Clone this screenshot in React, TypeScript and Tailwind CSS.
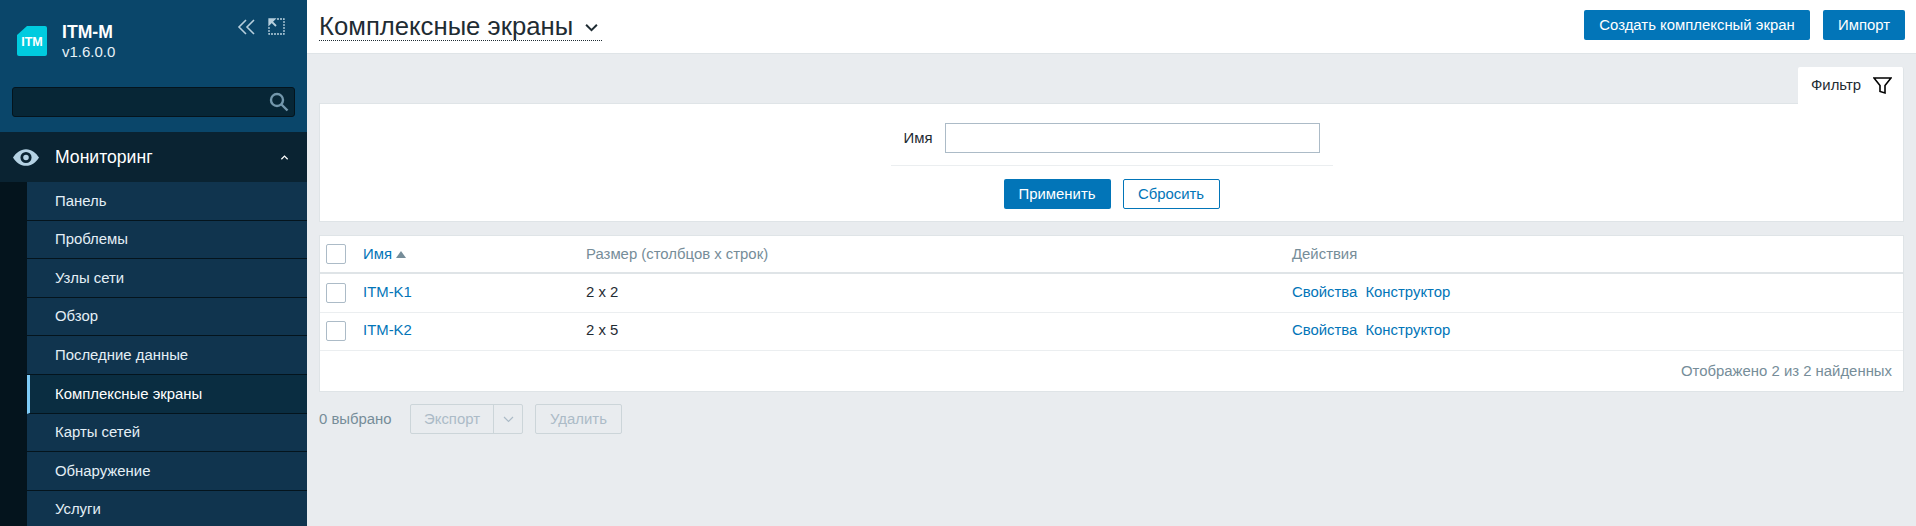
import React from "react";

const items = ["Панель", "Проблемы", "Узлы сети", "Обзор", "Последние данные", "Комплексные экраны", "Карты сетей", "Обнаружение", "Услуги"];

function Sidebar() {
  return (
    <aside className="w-[307px] h-[526px] shrink-0 bg-[#0a466a] overflow-hidden flex flex-col">
      <div className="h-[132px] shrink-0 flex flex-col">
        <div className="flex h-[87px] pl-[17px] pr-[22px]">
          <svg width="30" height="30" viewBox="0 0 30 30" className="mt-[26px] shrink-0">
            <path d="M10 0H28a2 2 0 0 1 2 2V28a2 2 0 0 1-2 2H2a2 2 0 0 1-2-2V9Z" fill="#00cbdf" />
            <text x="15" y="20" textAnchor="middle" fill="#fff" fontSize="12.5" fontWeight="700" fontFamily="Liberation Sans">ITM</text>
          </svg>
          <div className="ml-[15px] mt-[22px] text-white leading-[20px]">
            <div className="font-bold text-[17.6px] h-[20px]">ITM-M</div>
            <div className="text-[#e6f1f7] text-[15px] -mt-px pt-[1px]">v1.6.0.0</div>
          </div>
          <div className="ml-auto mt-[18px] flex gap-[13px] h-[18px]">
            <svg width="18" height="18" viewBox="0 0 18 18" fill="none" stroke="#b7cfdd" strokeWidth="1.6">
              <path d="M9 2 2 9l7 7M17 2l-7 7 7 7" />
            </svg>
            <svg width="17" height="17" viewBox="0 0 17 17" fill="none" stroke="#b7cfdd" strokeWidth="1.3">
              <path d="M9 1h7v15H1V9" strokeDasharray="2 1" />
              <path d="M1.5 1.5 8 8" strokeWidth="1.8" />
              <path d="M1 1h6L1 7Z" fill="#b7cfdd" />
            </svg>
          </div>
        </div>
        <div className="mx-[12px] h-[30px] bg-[#072636] border border-[#04141d] rounded-[3px] flex items-center justify-end pr-[5px]">
          <svg width="20" height="20" viewBox="0 0 20 20" fill="none" stroke="#7397ac" strokeWidth="2.4">
            <circle cx="8" cy="8" r="6" />
            <path d="m12.5 12.5 6 6" />
          </svg>
        </div>
      </div>
      <div className="h-[50px] shrink-0 bg-[#0a2332] flex items-center text-white pl-[13px] pr-[18px]">
        <svg width="26" height="17" viewBox="0 0 28 18" className="shrink-0">
          <path fillRule="evenodd" fill="#b5d2e4" d="M14 0C8 0 3 4 0 9c3 5 8 9 14 9s11-4 14-9c-3-5-8-9-14-9Zm0 3a6 6 0 1 1 0 12 6 6 0 0 1 0-12Zm0 3a3 3 0 1 0 0 6 3 3 0 0 0 0-6Z" />
        </svg>
        <span className="ml-[16px] text-[17.6px]">Мониторинг</span>
        <svg width="9" height="7" viewBox="0 0 10 7" fill="none" stroke="#fff" strokeWidth="1.4" className="ml-auto">
          <path d="M1.5 5.5 5 2l3.5 3.5" />
        </svg>
      </div>
      <div className="flex-1 bg-[#04141d] pl-[27px]">
        {items.map((t) => {
          const active = t === "Комплексные экраны";
          return (
            <div
              key={t}
              className={
                active
                  ? "h-[38.6px] border-b border-[#04141d] flex items-center pl-[25px] bg-[#0a2d41] text-white border-l-[3px] border-l-[#7ecbf7]"
                  : "h-[38.6px] border-b border-[#04141d] flex items-center pl-[28px] bg-[#10344e] text-[#e4eff6]"
              }
            >
              {t}
            </div>
          );
        })}
      </div>
    </aside>
  );
}

function Cb() {
  return <span className="block w-[20px] h-[20px] bg-white border border-[#acbbc7] rounded-[2px]" />;
}

function Row({ name, size }: { name: string; size: string }) {
  return (
    <div className="flex items-center h-[38.5px] border-b border-[#ebeef0]">
      <div className="w-[43px] pl-[6px]"><Cb /></div>
      <div className="w-[223px] text-[#0275b8] pb-[2px]">{name}</div>
      <div className="w-[706px] text-[#1f2c33] pb-[2px]">{size}</div>
      <div className="text-[#0275b8] flex gap-[8px] pb-[2px]">
        <span>Свойства</span>
        <span>Конструктор</span>
      </div>
    </div>
  );
}

export default function App() {
  return (
    <div className="w-[1916px] h-[526px] flex overflow-hidden bg-[#e9ecef] text-[14.9px] text-[#1f2c33] font-['Liberation_Sans',Arial,sans-serif]">
      <Sidebar />
      <main className="flex-1 min-w-0 flex flex-col">
        <header className="h-[54px] shrink-0 bg-white border-b border-[#dfe4e7] flex items-start justify-between pl-[12px] pr-[11px]">
          <div className="mt-[7px] h-[34px] flex items-center border-b border-dotted border-[#1f2c33] text-[25.7px] leading-[30px] pt-[5px]">
            <span>Комплексные экраны</span>
            <svg width="15" height="9" viewBox="0 0 16 10" fill="none" stroke="#1f2c33" strokeWidth="2.2" className="ml-[11px] mt-[3px] mr-[3px]">
              <path d="M2 2l6 6 6-6" />
            </svg>
          </div>
          <div className="mt-[10px] flex gap-[13px] text-white">
            <button className="h-[30px] w-[226px] rounded-[2px] bg-[#0275b8]">Создать комплексный экран</button>
            <button className="h-[30px] w-[82px] rounded-[2px] bg-[#0275b8]">Импорт</button>
          </div>
        </header>
        <div className="pl-[12px] pr-[12px]">
          <div className="flex justify-end mt-[13px]">
            <div className="w-[106px] h-[37px] bg-white rounded-t-[2px] flex items-center pl-[13px] gap-[12px] -mb-px relative z-10 border-r border-[#dfe4e7]">
              <span>Фильтр</span>
              <svg width="19" height="19" viewBox="0 0 19 19" fill="none" stroke="#000" strokeWidth="1.6">
                <path d="M1 2h17l-6 7.5V17l-5-1.5V9.5Z" />
              </svg>
            </div>
          </div>
          <section className="h-[119px] bg-white border border-[#dfe4e7] flex flex-col items-center">
            <div className="flex items-center mt-[19px] w-[442px] h-[43px] border-b border-[#ebeef0] pb-[12px]">
              <span className="w-[42px] text-right">Имя</span>
              <span className="ml-[12px] block w-[375px] h-[30px] border border-[#acbbc7]" />
            </div>
            <div className="flex gap-[12px] mt-[13px]">
              <button className="h-[30px] w-[107px] rounded-[2px] bg-[#0275b8] text-white">Применить</button>
              <button className="h-[30px] w-[97px] rounded-[2px] border border-[#0275b8] text-[#0275b8]">Сбросить</button>
            </div>
          </section>
          <section className="mt-[13px] h-[157px] bg-white border border-[#dfe4e7]">
            <div className="flex items-center h-[38px] border-b-[2px] border-[#dfe4e7] text-[#768d99]">
              <div className="w-[43px] pl-[6px]"><Cb /></div>
              <div className="w-[223px] flex items-center gap-[4px] text-[#0275b8]">
                <span>Имя</span>
                <svg width="10" height="7" viewBox="0 0 10 7" className="mt-[1px]"><path d="M5 0l5 7H0Z" fill="#768d99" /></svg>
              </div>
              <div className="w-[706px]">Размер (столбцов x строк)</div>
              <div>Действия</div>
            </div>
            <Row name="ITM-K1" size="2 x 2" />
            <Row name="ITM-K2" size="2 x 5" />
            <div className="h-[40px] flex items-center justify-end pr-[11px] text-[#768d99]">Отображено 2 из 2 найденных</div>
          </section>
          <div className="mt-[12px] flex items-center h-[30px]">
            <span className="text-[#768d99] w-[91px]">0 выбрано</span>
            <div className="flex h-[30px] border border-[#ccd5d9] rounded-[2px] text-[#acbbc7]">
              <span className="w-[83px] flex items-center justify-center border-r border-[#ccd5d9]">Экспорт</span>
              <span className="w-[28px] flex items-center justify-center">
                <svg width="11" height="7" viewBox="0 0 11 7" fill="none" stroke="#acbbc7" strokeWidth="1.2"><path d="M1 1l4.5 4.5L10 1" /></svg>
              </span>
            </div>
            <span className="ml-[12px] w-[87px] h-[30px] flex items-center justify-center border border-[#ccd5d9] rounded-[2px] text-[#acbbc7]">Удалить</span>
          </div>
        </div>
      </main>
    </div>
  );
}
